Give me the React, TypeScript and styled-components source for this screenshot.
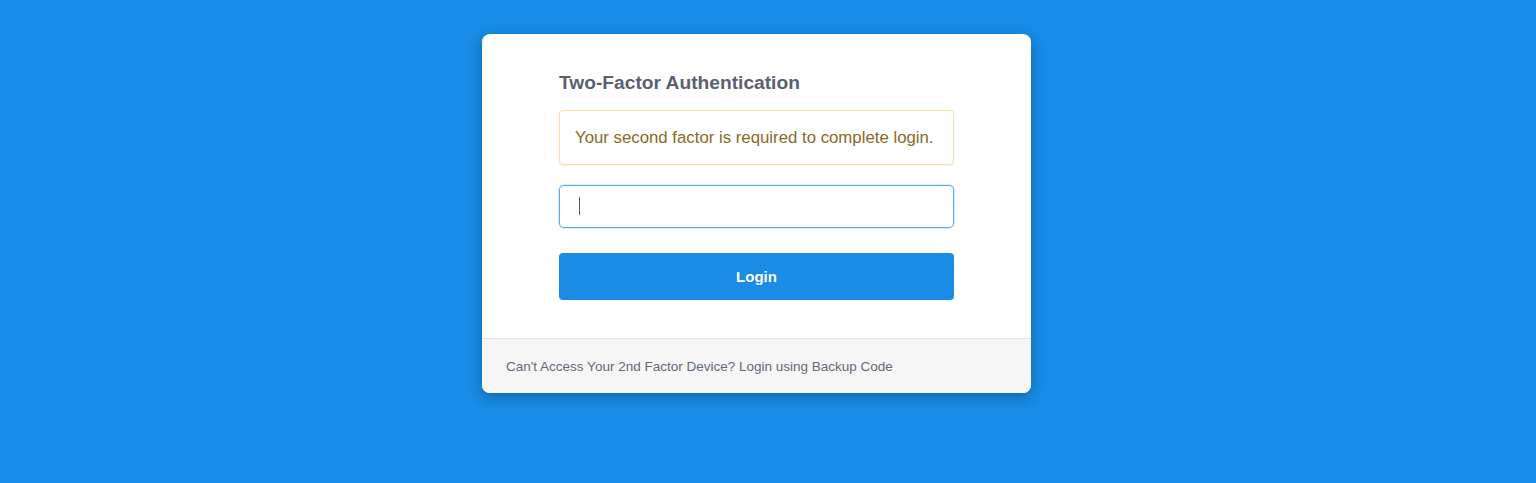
import React from "react";
import styled, { createGlobalStyle } from "styled-components";

const Global = createGlobalStyle`
  html, body { margin: 0; padding: 0; background: #188ce6; }
  body { font-family: "Liberation Sans", Arial, sans-serif; }
  * { box-sizing: border-box; }
`;

const Page = styled.div`
  width: 1536px;
  height: 483px;
  background: #188ce6;
  display: flex;
  justify-content: center;
  align-items: flex-start;
  padding: 34px 23px 0 0;
`;

const Card = styled.div`
  width: 549px;
  background: #ffffff;
  border-radius: 8px;
  box-shadow: 0 4px 14px rgba(0, 0, 0, 0.28);
  overflow: hidden;
`;

const Body = styled.div`
  padding: 38px 77px 38px 77px;
  display: flex;
  flex-direction: column;
`;

const Title = styled.h2`
  margin: 0;
  font-size: 19.2px;
  line-height: 22px;
  font-weight: 700;
  color: #5b5f6e;
`;

const Alert = styled.div`
  margin-top: 16px;
  border: 1px solid #fbe0a0;
  border-radius: 4px;
  background: #ffffff;
  padding: 17px 15px;
  font-size: 16.8px;
  line-height: 19px;
  color: #8a6a24;
  box-shadow: 0 1px 2px rgba(0, 0, 0, 0.05);
`;

const InputWrap = styled.div`
  margin-top: 20px;
  position: relative;
  height: 43px;
`;

const Input = styled.input`
  display: block;
  appearance: none;
  width: 100%;
  height: 43px;
  border: none;
  border-radius: 5px;
  padding: 0 20px;
  font-size: 16px;
  font-family: "Liberation Sans", Arial, sans-serif;
  outline: none;
  caret-color: transparent;
  background: #fff;
  box-shadow: inset 0 0 0 1px #5fa9ee, 0 0 0 0.5px rgba(95, 169, 238, 0.5);
`;

const Caret = styled.span`
  position: absolute;
  left: 20px;
  top: 12px;
  width: 1px;
  height: 18px;
  background: #555b66;
`;

const Button = styled.button`
  margin-top: 25px;
  height: 47px;
  width: 100%;
  border: none;
  border-radius: 4px;
  background: #1a8ce6;
  color: #ffffff;
  font-family: "Liberation Sans", Arial, sans-serif;
  font-size: 15px;
  font-weight: 700;
  cursor: pointer;
`;

const Footer = styled.div`
  height: 55px;
  border-top: 1px solid #e3e3e3;
  background: #f6f6f6;
  display: flex;
  align-items: center;
  padding: 1px 24px 0;
  font-size: 13.5px;
  color: #656878;
`;

export default function App() {
  return (
    <>
      <Global />
      <Page>
        <Card>
          <Body>
            <Title>Two-Factor Authentication</Title>
            <Alert>Your second factor is required to complete login.</Alert>
            <InputWrap>
              <Input type="text" aria-label="Authentication code" />
              <Caret />
            </InputWrap>
            <Button>Login</Button>
          </Body>
          <Footer>Can't Access Your 2nd Factor Device? Login using Backup Code</Footer>
        </Card>
      </Page>
    </>
  );
}
